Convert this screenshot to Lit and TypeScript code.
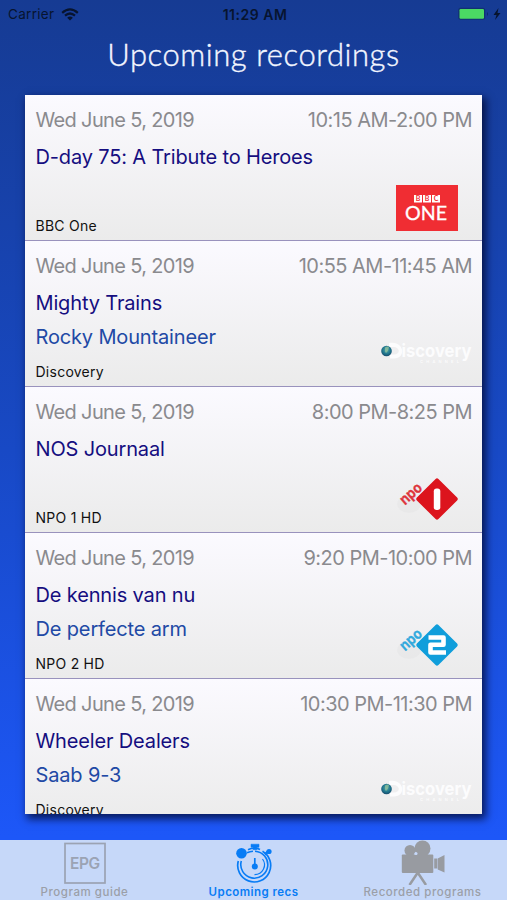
import { LitElement, html, svg, css, nothing } from "lit";
import { customElement, property } from "lit/decorators.js";

type Logo = "bbc" | "discovery" | "npo1" | "npo2";

interface Recording {
  date: string;
  time: string;
  title: string;
  subtitle?: string;
  channel: string;
  logo: Logo;
}

const recordings: Recording[] = [
  { date: "Wed June 5, 2019", time: "10:15 AM-2:00 PM", title: "D-day 75: A Tribute to Heroes", channel: "BBC One", logo: "bbc" },
  { date: "Wed June 5, 2019", time: "10:55 AM-11:45 AM", title: "Mighty Trains", subtitle: "Rocky Mountaineer", channel: "Discovery", logo: "discovery" },
  { date: "Wed June 5, 2019", time: "8:00 PM-8:25 PM", title: "NOS Journaal", channel: "NPO 1 HD", logo: "npo1" },
  { date: "Wed June 5, 2019", time: "9:20 PM-10:00 PM", title: "De kennis van nu", subtitle: "De perfecte arm", channel: "NPO 2 HD", logo: "npo2" },
  { date: "Wed June 5, 2019", time: "10:30 PM-11:30 PM", title: "Wheeler Dealers", subtitle: "Saab 9-3", channel: "Discovery", logo: "discovery" },
];

@customElement("channel-logo")
class ChannelLogo extends LitElement {
  @property() name: Logo = "bbc";

  static styles = css`
    :host { display: block; width: 92px; height: 62px; }
    svg { display: block; overflow: visible; }
    text { font-family: Lato, sans-serif; letter-spacing: 0; }
    .inter { font-family: Inter, sans-serif; }
  `;

  private npo(color: string, digit: unknown) {
    return svg`
      <ellipse cx="29" cy="36" rx="12" ry="9" fill="#000" opacity=".02"/>
      <text transform="translate(25 37.500) rotate(-42)" class="inter" font-size="15" font-weight="700" fill=${color} stroke=${color} stroke-width=".3" opacity=".85" textLength="24.5" lengthAdjust="spacingAndGlyphs">npo</text>
      <path d="M57 12.3 75.7 31 57 49.7 38.3 31Z" fill=${color} stroke=${color} stroke-width="4" stroke-linejoin="round"/>
      ${digit}`;
  }

  private art() {
    switch (this.name) {
      case "bbc":
        return svg`
          <rect x="16" y="9" width="62" height="46" fill="#f02d33"/>
          <path d="M34 19h8v7.500h-8zM43 19h8v7.500h-8zM52 19h8v7.500h-8z" fill="#fff"/>
          <g font-size="7" font-weight="700" fill="#f02d33" text-anchor="middle">
            <text x="38" y="25.300">B</text><text x="47" y="25.300">B</text><text x="56" y="25.300">C</text>
          </g>
          <text x="25" y="43.700" font-size="19" font-weight="400" fill="#fff" stroke="#fff" stroke-width=".3" textLength="42" lengthAdjust="spacingAndGlyphs">ONE</text>`;
      case "discovery":
        return svg`
          <defs><radialGradient id="globe" cx=".5" cy=".4" r=".6">
            <stop offset="0" stop-color="#5da8a4"/><stop offset=".6" stop-color="#20788f"/><stop offset="1" stop-color="#174a6b"/>
          </radialGradient></defs>
          <g transform="translate(0 -2.500)">
            <path d="M9 23.500c15-3 18 15 5 15.500h-4v-4h4c7 0 6-8-1-7.500h-4z" fill="#fcfcfd"/>
            <circle cx="6.500" cy="31.500" r="5.300" fill="url(#globe)"/>
            <path d="M5 28q3-2 4 0l-1 3q-2 4-3 1z" fill="#9ac69b" opacity=".7"/>
            <text x="21.500" y="37" class="inter" font-size="18" font-weight="700" fill="#fcfcfd" textLength="70" lengthAdjust="spacingAndGlyphs">iscovery</text>
            <text x="40" y="43.500" class="inter" font-size="4" font-weight="600" fill="#fff" opacity=".85" textLength="39">CHANNEL</text>
          </g>`;
      case "npo1":
        return this.npo("#dc141d", svg`<rect x="53.800" y="20.500" width="6.500" height="21.500" rx="2.800" fill="#fff"/>`);
      case "npo2":
        return this.npo("#109edb", svg`<path d="M48.500 23.500H63.500V30.800H50.500V38.500H66" fill="none" stroke="#fff" stroke-width="4.600" stroke-linejoin="round"/>`);
    }
  }

  render() {
    return html`<svg width="92" height="62" viewBox="0 0 92 62">${this.art()}</svg>`;
  }
}

@customElement("recording-row")
class RecordingRow extends LitElement {
  @property({ attribute: false }) item!: Recording;

  static styles = css`
    :host {
      display: flex;
      flex-direction: column;
      flex: none;
      box-sizing: border-box;
      height: 146px;
      padding: 13px 10px 0 10.500px;
      border-bottom: 1px solid #9992bd;
      background: linear-gradient(#fbfaff, #ebebeb);
      white-space: nowrap;
    }
    .when { display: flex; justify-content: space-between; font-size: 20px; line-height: 24px; color: #8a8a8e; letter-spacing: -0.65px; }
    .time { letter-spacing: -0.52px; }
    .body { display: flex; flex: 1; justify-content: space-between; }
    .info { display: flex; flex-direction: column; }
    .title, .sub { font-size: 20px; line-height: 25px; letter-spacing: -0.15px; }
    .title { margin-top: 13px; color: #150e80; }
    .sub { margin-top: 9px; height: 25px; color: #2149a5; }
    .channel { margin-top: 13px; font-size: 14px; line-height: 18px; color: #111; letter-spacing: 0.25px; }
    channel-logo { margin-top: 44px; }
  `;

  render() {
    const r = this.item;
    return html`
      <div class="when"><span>${r.date}</span><span class="time">${r.time}</span></div>
      <div class="body">
        <div class="info">
          <div class="title">${r.title}</div>
          <div class="sub">${r.subtitle ?? nothing}</div>
          <div class="channel">${r.channel}</div>
        </div>
        <channel-logo .name=${r.logo}></channel-logo>
      </div>`;
  }
}

@customElement("app-root")
class AppRoot extends LitElement {
  static styles = css`
    :host {
      display: flex;
      flex-direction: column;
      width: 507px;
      height: 900px;
      overflow: hidden;
      font-family: Inter, "Liberation Sans", sans-serif;
      background: linear-gradient(#163b93, #1849c5 50%, #1d57f8 93%);
    }
    svg { display: block; }
    .status { display: grid; grid-template-columns: 1fr auto 1fr; height: 28px; padding: 0 5px 0 8px; align-items: center; font-size: 13.500px; color: #07142f; }
    .carrier { display: flex; align-items: center; gap: 7px; letter-spacing: 0.3px; }
    .clock { font-size: 14px; font-weight: 600; letter-spacing: 0.5px; }
    .power { display: flex; justify-content: flex-end; }
    h1 { margin: 0; height: 67px; text-align: center; font: 300 31px/52px Lato, sans-serif; letter-spacing: 0.55px; color: #f3f6ff; -webkit-text-stroke: 0.4px #f3f6ff; }
    .list { display: flex; flex-direction: column; height: 719px; overflow: hidden; }
    .shadow { flex: none; box-shadow: 3px 4px 8px 1px rgba(0, 5, 40, 0.75); margin: 0 25px; }
    .tabs { display: grid; grid-template-columns: repeat(3, 1fr); height: 60px; margin-top: auto; background: #c6d8f9; color: #9b9fa8; font-size: 11.500px; font-weight: 500; letter-spacing: 0.55px; }
    .tab { display: flex; flex-direction: column; align-items: center; line-height: 14px; white-space: nowrap; }
    .tab svg { flex: none; }
    .active { color: #087cf5; font-weight: 600; letter-spacing: 0.45px; }
    .epg { font-weight: 600; letter-spacing: 0; }
  `;

  render() {
    return html`
      <div class="status">
        <div class="carrier">Carrier
          <svg width="18" height="13" viewBox="0 0 18 13" fill="none" stroke="#07142f" stroke-width="2.200">
            <path d="M1.200 4.900Q9-2 16.800 4.900M4 7.700Q9 3.300 14 7.700"/><path d="M9 12.500 6.100 9.700Q9 7.300 11.900 9.700Z" fill="#07142f" stroke="none"/>
          </svg>
        </div>
        <div class="clock">11:29 AM</div>
        <div class="power">
          <svg width="44" height="14" viewBox="0 0 44 14">
            <rect x=".2" y=".8" width="27" height="12" rx="2.500" fill="#123072"/><rect x="1.500" y="2.100" width="24.500" height="9.700" rx="1.200" fill="#4bd964"/>
            <path d="M29 5q2 2 0 4z" fill="#0d2966"/><path d="M40.500 1 35.500 8h3l-1.500 5 5.500-7h-3z" fill="#07142f"/>
          </svg>
        </div>
      </div>
      <h1>Upcoming recordings</h1>
      <div class="shadow"><div class="list">
        ${recordings.map((r) => html`<recording-row .item=${r}></recording-row>`)}
      </div></div>
      <div class="tabs">
        <div class="tab">
          <svg width="60" height="45" viewBox="0 0 60 45">
            <rect x="10" y="3.500" width="40" height="39.500" fill="none" stroke="#9ba3b3" stroke-width="1.700"/>
            <text class="epg" x="15" y="28.500" font-size="15.500" fill="#9ba3b3" textLength="30">EPG</text>
          </svg>
          <span>Program guide</span>
        </div>
        <div class="tab active">
          <svg width="60" height="45" viewBox="0 0 60 45" fill="none" stroke="#087cf5">
            <path d="M14.300 21A16.500 16.500 0 1 0 38.500 11.200M24 9.800Q30 6.800 36 9.500" stroke-width="1.700"/>
            <path d="M17.300 21A13.500 13.500 0 1 0 31 11.200M23 12.700Q26 11.300 29 11.200" stroke-width="1.600"/>
            <path d="M38.500 19A9.800 9.800 0 0 1 30.500 34.700" stroke-width="1.200"/>
            <path d="M27 4.200h8v3h-2.200v2.500h-3.600V7.200H27z" fill="#087cf5" stroke-width=".5"/>
            <path d="m41 14.500 3.500-3.500" stroke-width="2.500"/><circle cx="45" cy="11.500" r="2.600" fill="#087cf5" stroke="none"/>
            <circle cx="17.500" cy="13.200" r="5.300" fill="#087cf5" stroke="none"/>
            <path d="M30.800 18v8" stroke-width="1.700"/><circle cx="30.800" cy="26.500" r="3" fill="#087cf5" stroke="none"/>
          </svg>
          <span>Upcoming recs</span>
        </div>
        <div class="tab">
          <svg width="60" height="45" viewBox="0 0 60 45" fill="#989ba1">
            <circle cx="17" cy="10.500" r="5.500"/><circle cx="29.500" cy="8.500" r="8"/>
            <rect x="8.800" y="14.500" width="31.500" height="18.500" rx="1"/>
            <path d="M41.200 18.500h3v10h-3zM44.700 18.500 51.500 15v17.500l-6.800-3z"/>
            <path d="M24.500 33 16.500 45M25 33l8 12" fill="none" stroke="#989ba1" stroke-width="2.500"/>
            <circle cx="23" cy="13.500" r="1.500" fill="#c6d8f9"/>
          </svg>
          <span>Recorded programs</span>
        </div>
      </div>`;
  }
}
